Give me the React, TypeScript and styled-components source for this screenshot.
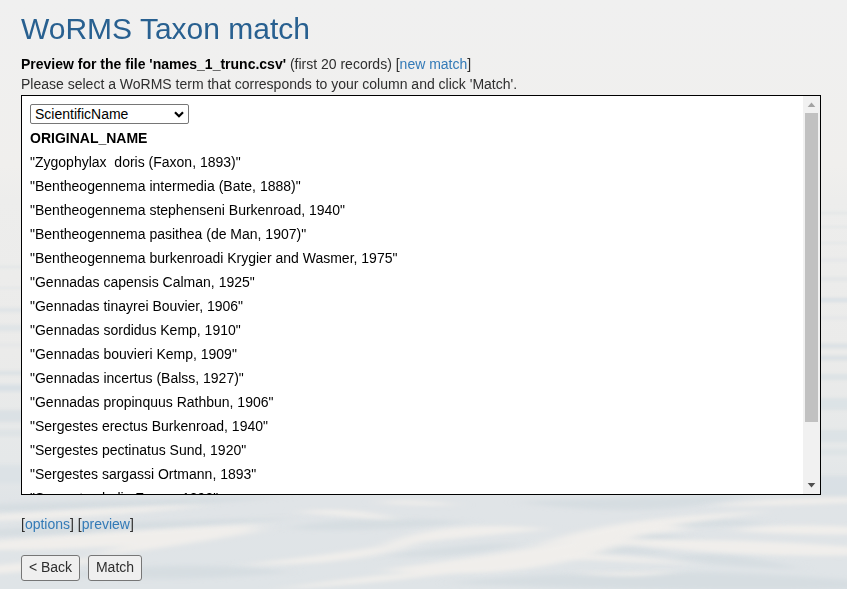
import React from "react";
import styled, { createGlobalStyle } from "styled-components";

const Global = createGlobalStyle`
  * { box-sizing: border-box; }
  html, body { margin: 0; }
  body {
    background: #f0efee;
    font: 14px/20px "Liberation Sans", Arial, sans-serif;
    color: #2e2e2e;
    overflow: hidden;
  }
`;

const Page = styled.main`
  height: 589px;
  padding: 12px 26px 0 21px;
  display: flex;
  flex-direction: column;
`;

const WaterSvg = styled.svg`
  position: fixed;
  inset: 0;
  z-index: -1;
`;

const Title = styled.h1`
  margin: 0;
  font-size: 30px;
  line-height: 33px;
  font-weight: 400;
  color: #286090;
`;

const Intro = styled.p`
  margin: 9px 0 1px;
`;

const Strong = styled.b`
  color: #000;
`;

const Link = styled.a`
  color: #337ab7;
  text-decoration: none;
`;

const Preview = styled.section`
  width: 800px;
  height: 400px;
  border: 1px solid #000;
  background: #fff;
  color: #000;
  display: flex;
`;

const Records = styled.div`
  flex: 1;
  overflow: hidden;
  padding: 6px 8px 0;
`;

const Row = styled.div<{ $head?: boolean }>`
  height: 24px;
  line-height: 24px;
  white-space: pre;
  font-weight: ${(p) => (p.$head ? 700 : 400)};
`;

const Picker = styled.button`
  display: flex;
  align-items: center;
  justify-content: space-between;
  width: 159px;
  height: 20px;
  margin: 2px 0;
  padding: 0 4px;
  border: 1px solid #767676;
  border-radius: 2px;
  background: #fff;
  color: #000;
  font: inherit;
  line-height: 18px;
`;

const Scrollbar = styled.div`
  width: 17px;
  background: #f1f1f1;
  display: flex;
  flex-direction: column;
  align-items: center;
`;

const Arrow = styled.svg`
  width: 17px;
  height: 17px;
  flex: none;
`;

const Thumb = styled.div`
  width: 13px;
  height: 309px;
  background: #c1c1c1;
  margin-bottom: auto;
`;

const Links = styled.div`
  margin-top: 19px;
`;

const Actions = styled.div`
  display: flex;
  gap: 8px;
  margin-top: 21px;
`;

const Button = styled.button<{ $width: number }>`
  width: ${(p) => p.$width}px;
  height: 26px;
  padding: 0 0 2px;
  border: 1px solid #767676;
  border-radius: 3px;
  background: #efefef;
  color: #2e2e2e;
  font: inherit;
  white-space: nowrap;
`;

const records = [
  '"Zygophylax  doris (Faxon, 1893)"',
  '"Bentheogennema intermedia (Bate, 1888)"',
  '"Bentheogennema stephenseni Burkenroad, 1940"',
  '"Bentheogennema pasithea (de Man, 1907)"',
  '"Bentheogennema burkenroadi Krygier and Wasmer, 1975"',
  '"Gennadas capensis Calman, 1925"',
  '"Gennadas tinayrei Bouvier, 1906"',
  '"Gennadas sordidus Kemp, 1910"',
  '"Gennadas bouvieri Kemp, 1909"',
  '"Gennadas incertus (Balss, 1927)"',
  '"Gennadas propinquus Rathbun, 1906"',
  '"Sergestes erectus Burkenroad, 1940"',
  '"Sergestes pectinatus Sund, 1920"',
  '"Sergestes sargassi Ortmann, 1893"',
  '"Sergestes halia Faxon, 1893"',
];

// Start x/y, control x/y, end x/y, thickness of a ripple tapered at both ends.
type Ripple = [number, number, number, number, number, number, number];

const swells: Ripple[] = [
  [-90, 522, 80, 514, 210, 505, 7],
  [-90, 548, 130, 543, 270, 524, 14],
  [90, 556, 160, 541, 270, 529, 9],
  [-90, 576, 40, 567, 110, 558, 9],
  [295, 512, 350, 511, 400, 520, 6],
  [375, 502, 410, 502, 460, 505, 4],
  [240, 565, 370, 558, 430, 538, 8],
  [380, 546, 440, 529, 550, 529, 11],
  [380, 570, 560, 566, 660, 525, 20],
  [530, 548, 600, 526, 770, 511, 9],
  [560, 545, 630, 522, 690, 530, 12],
  [270, 590, 390, 577, 500, 567, 6],
  [550, 558, 600, 555, 700, 565, 5],
  [570, 572, 640, 577, 680, 570, 4],
  [600, 541, 760, 549, 920, 553, 13],
  [730, 530, 800, 528, 920, 533, 9],
  [710, 506, 800, 500, 920, 499, 6],
];

const troughs: Ripple[] = [
  [-90, 508, 60, 510, 290, 496, 9],
  [290, 528, 350, 524, 470, 522, 10],
  [-90, 536, 80, 530, 300, 518, 9],
  [60, 575, 180, 571, 290, 572, 13],
  [380, 556, 470, 551, 520, 543, 8],
  [520, 502, 650, 508, 750, 495, 13],
  [600, 539, 640, 533, 690, 540, 8],
  [560, 553, 610, 544, 680, 556, 8],
  [670, 558, 720, 557, 800, 569, 10],
  [450, 583, 670, 576, 930, 588, 18],
  [650, 525, 700, 521, 770, 524, 7],
];

// Bands visible at the sides of the preview panel: y, height, opacity.
type Band = [number, number, number];
const leftBands: Band[] = [
  [267, 2, 0.5], [288, 2, 0.4], [310, 4, 0.6], [328, 6, 0.6], [345, 3, 0.3],
  [373, 4, 0.8], [388, 7, 0.9], [416, 12, 0.8], [433, 7, 0.5], [474, 18, 0.6],
];
const rightBands: Band[] = [
  [213, 2, 0.5], [227, 2, 0.4], [243, 2, 0.4], [260, 3, 0.3], [279, 3, 0.5],
  [300, 4, 0.9], [318, 3, 0.3], [346, 5, 0.8], [358, 5, 0.8], [377, 6, 0.7],
  [404, 12, 0.7], [436, 12, 0.7], [452, 6, 0.5], [486, 20, 0.8],
];

const ripplePath = ([x1, y1, cx, cy, x2, y2, t]: Ripple) =>
  `M${x1} ${y1}Q${cx} ${cy - t} ${x2} ${y2}Q${cx} ${cy + t} ${x1} ${y1}Z`;

function Water() {
  return (
    <WaterSvg width="847" height="589" viewBox="0 0 847 589" aria-hidden="true">
      <defs>
        <linearGradient id="sea" x1="0" y1="0" x2="0" y2="1">
          <stop offset="0" stopColor="#f0f0f0" />
          <stop offset="0.28" stopColor="#f0efed" />
          <stop offset="0.34" stopColor="#ededec" />
          <stop offset="0.6" stopColor="#ebebea" />
          <stop offset="0.78" stopColor="#e5e8e9" />
          <stop offset="0.85" stopColor="#e0e4e7" />
          <stop offset="1" stopColor="#dfe4e7" />
        </linearGradient>
        <filter id="soft" filterUnits="userSpaceOnUse" x="-60" y="150" width="967" height="480">
          <feGaussianBlur stdDeviation="9 2" />
        </filter>
        <filter id="fine" filterUnits="userSpaceOnUse" x="-60" y="150" width="967" height="480">
          <feGaussianBlur stdDeviation="5 1.8" />
        </filter>
      </defs>
      <rect width="847" height="589" fill="url(#sea)" />
      <g filter="url(#fine)" fill="#d7dfe4">
        {leftBands.map(([y, h, o]) => (
          <rect key={y} x="-60" y={y - h / 2} width="110" height={h} opacity={o} />
        ))}
        {rightBands.map(([y, h, o]) => (
          <rect key={y} x="790" y={y - h / 2} width="117" height={h} opacity={o} />
        ))}
      </g>
      <g filter="url(#soft)" fill="#d6dde1">
        {troughs.map((r) => (
          <path key={r.join()} d={ripplePath(r)} />
        ))}
      </g>
      <g filter="url(#soft)" fill="#f0eeeb">
        {swells.map((r) => (
          <path key={r.join()} d={ripplePath(r)} />
        ))}
      </g>
    </WaterSvg>
  );
}

export default function App() {
  return (
    <>
      <Global />
      <Water />
      <Page>
        <Title>WoRMS Taxon match</Title>
        <Intro>
          <Strong>Preview for the file 'names_1_trunc.csv'</Strong> (first 20 records) [<Link>new match</Link>]
          <br />
          Please select a WoRMS term that corresponds to your column and click 'Match'.
        </Intro>
        <Preview>
          <Records>
            <Picker>
              ScientificName
              <svg width="10" height="7" viewBox="0 0 10 7" fill="none" stroke="#000" strokeWidth="2.2">
                <path d="M1 1.2 5 5.2 9 1.2" />
              </svg>
            </Picker>
            <Row $head>ORIGINAL_NAME</Row>
            {records.map((r) => (
              <Row key={r}>{r}</Row>
            ))}
          </Records>
          <Scrollbar>
            <Arrow viewBox="0 0 17 17">
              <path d="M8.5 6.5 12.3 11H4.7Z" fill="#a3a3a3" />
            </Arrow>
            <Thumb />
            <Arrow viewBox="0 0 17 17">
              <path d="M4.7 6H12.3L8.5 10.5Z" fill="#505050" />
            </Arrow>
          </Scrollbar>
        </Preview>
        <Links>
          [<Link>options</Link>] [<Link>preview</Link>]
        </Links>
        <Actions>
          <Button $width={59}>&lt; Back</Button>
          <Button $width={54}>Match</Button>
        </Actions>
      </Page>
    </>
  );
}
